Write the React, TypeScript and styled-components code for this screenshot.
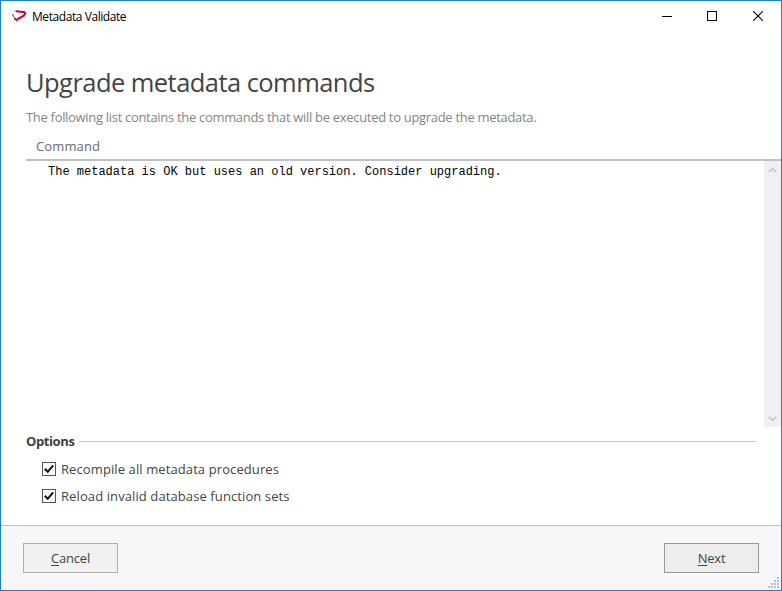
import React from "react";
import styled, { createGlobalStyle } from "styled-components";

const GlobalStyle = createGlobalStyle`
  * { box-sizing: border-box; }
  body { margin: 0; background: #fff; }
`;

const Window = styled.div`
  width: 782px;
  height: 591px;
  display: flex;
  flex-direction: column;
  background: #fff;
  border: 1px solid #1a80d2;
  font-family: "Open Sans", "Noto Sans", sans-serif;
  color: #444;
  overflow: hidden;
  white-space: nowrap;
`;

const TitleBar = styled.header`
  display: flex;
  align-items: center;
  height: 30px;
  flex: none;
  padding-left: 10px;
`;

const WindowTitle = styled.span`
  flex: 1;
  margin-left: 5px;
  padding-top: 2px;
  font: 12px/16px "Open Sans", sans-serif;
  letter-spacing: -0.43px;
  color: #000;
`;

const WindowButton = styled.button`
  width: 45.5px;
  height: 30px;
  padding: 0;
  border: 0;
  background: none;
  display: flex;
  align-items: center;
  justify-content: center;
`;

const MaximizeButton = styled(WindowButton)`
  padding-right: 2px;
`;

const Main = styled.main`
  flex: 1;
  display: flex;
  flex-direction: column;
  padding-left: 25px;
`;

const Heading = styled.h1`
  margin: 33px 0 0;
  font-weight: 400;
  font-size: 25.5px;
  line-height: 36px;
  letter-spacing: -0.55px;
  color: #444;
`;

const Description = styled.p`
  margin: 7px 0 0;
  font-size: 13px;
  line-height: 20px;
  letter-spacing: -0.31px;
  color: #858585;
`;

const ColumnHeader = styled.div`
  height: 34px;
  padding: 9px 0 0 10px;
  font-size: 13px;
  line-height: 20px;
  letter-spacing: 0.12px;
  color: #6a6a6f;
  border-bottom: 2px solid #c1c1c1;
`;

const CommandList = styled.section`
  display: flex;
  justify-content: space-between;
  height: 266px;
`;

const CommandText = styled.div`
  padding: 4px 0 0 22px;
  font: 12px/15px "Liberation Mono", monospace;
  color: #000;
`;

const ScrollTrack = styled.div`
  width: 17px;
  display: flex;
  flex-direction: column;
  justify-content: space-between;
  align-items: center;
  padding: 6px 0 5px;
  background: #f0f0f0;
`;

const GroupTitle = styled.div`
  display: flex;
  align-items: center;
  gap: 5px;
  height: 20px;
  margin: 4px 25px 0 0;
  font-size: 13px;
  font-weight: 700;
  letter-spacing: -0.4px;
  color: #404040;
  &::after {
    content: "";
    flex: 1;
    height: 1px;
    background: #c8c8c8;
  }
`;

const Options = styled.div`
  display: flex;
  flex-direction: column;
  gap: 7px;
  padding: 8px 0 0 16px;
`;

const Option = styled.label<{ $tracking: number }>`
  display: flex;
  align-items: center;
  gap: 5px;
  height: 20px;
  font-size: 13px;
  letter-spacing: ${(p) => p.$tracking}px;
  color: #444;
`;

const Box = styled.span`
  width: 14px;
  height: 14px;
  border: 1px solid #555;
  background: #fff;
  display: flex;
`;

const Footer = styled.footer`
  height: 65px;
  flex: none;
  display: flex;
  justify-content: space-between;
  padding: 17px 22px 0;
  border-top: 1px solid #bdbdbd;
  background: #f7f7f7;
  position: relative;
`;

const Button = styled.button<{ $primary?: boolean }>`
  width: 95px;
  height: 30px;
  padding: 0;
  border: 1px solid ${(p) => (p.$primary ? "#999" : "#adadad")};
  background: ${(p) => (p.$primary ? "#ededed" : "#f1f1f1")};
  font: 13px/20px "Open Sans", sans-serif;
  letter-spacing: -0.2px;
  color: #444;
`;

const AccessKey = styled.span`
  text-decoration: underline;
  text-underline-offset: 2px;
  text-decoration-thickness: 1px;
`;

const Grip = styled.svg`
  position: absolute;
  right: 2px;
  bottom: 2px;
`;

const Logo = () => (
  <svg width="16" height="16" viewBox="0 0 16 16" fill="none">
    <path d="M1.5 6L4.5 12.5L6 13" stroke="#777" strokeWidth="1.5" strokeDasharray="3 1" />
    <path d="M3 4L5 2.5" stroke="#999" />
    <path d="M5 3.3L14.3 4.2" stroke="#bb0920" strokeWidth="2" />
    <path d="M14.7 4.5L13 7.5L5 12.2" stroke="#d20c27" strokeWidth="2.2" />
    <path d="M3.5 9.5L5 12" stroke="#bd1228" strokeWidth="1.3" />
  </svg>
);

const Chevron = ({ down = false }: { down?: boolean }) => (
  <svg width="9" height="6" viewBox="0 0 9 6" fill="none">
    <path d={down ? "M1 .8L4.5 4.3L8 .8" : "M1 5L4.5 1.5L8 5"} stroke="#c3c3c3" strokeWidth="1.5" />
  </svg>
);

const Check = () => (
  <svg width="12" height="12" viewBox="0 0 12 12" fill="none">
    <path d="M1.8 5.8L4.7 8.8L10.2 2.3" stroke="#111" strokeWidth="2" />
  </svg>
);

const gripDots = [[10, 1], [7, 4], [10, 4], [4, 7], [7, 7], [10, 7], [1, 10], [4, 10], [7, 10], [10, 10]];

const options = [
  { label: "Recompile all metadata procedures", tracking: 0.1 },
  { label: "Reload invalid database function sets", tracking: 0.1 },
];

export default function App() {
  return (
    <>
      <GlobalStyle />
      <Window>
        <TitleBar>
          <Logo />
          <WindowTitle>Metadata Validate</WindowTitle>
          <WindowButton aria-label="Minimize">
            <svg width="10" height="10"><path d="M0 5.5H10" stroke="#000" /></svg>
          </WindowButton>
          <MaximizeButton aria-label="Maximize">
            <svg width="10" height="10"><rect x=".5" y=".5" width="9" height="9" fill="none" stroke="#000" /></svg>
          </MaximizeButton>
          <WindowButton aria-label="Close">
            <svg width="10" height="10"><path d="M.2 .2L9.8 9.8M9.8 .2L.2 9.8" stroke="#000" strokeWidth="1.1" /></svg>
          </WindowButton>
        </TitleBar>
        <Main>
          <Heading>Upgrade metadata commands</Heading>
          <Description>
            The following list contains the commands that will be executed to upgrade the metadata.
          </Description>
          <ColumnHeader>Command</ColumnHeader>
          <CommandList>
            <CommandText>The metadata is OK but uses an old version. Consider upgrading.</CommandText>
            <ScrollTrack>
              <Chevron />
              <Chevron down />
            </ScrollTrack>
          </CommandList>
          <GroupTitle>Options</GroupTitle>
          <Options>
            {options.map((o) => (
              <Option key={o.label} $tracking={o.tracking}>
                <Box><Check /></Box>
                {o.label}
              </Option>
            ))}
          </Options>
        </Main>
        <Footer>
          <Button><AccessKey>C</AccessKey>ancel</Button>
          <Button $primary><AccessKey>N</AccessKey>ext</Button>
          <Grip width="12" height="12">
            {gripDots.map(([x, y]) => (
              <rect key={`${x}-${y}`} x={x} y={y} width="2" height="2" fill="#b8bfcd" />
            ))}
          </Grip>
        </Footer>
      </Window>
    </>
  );
}
